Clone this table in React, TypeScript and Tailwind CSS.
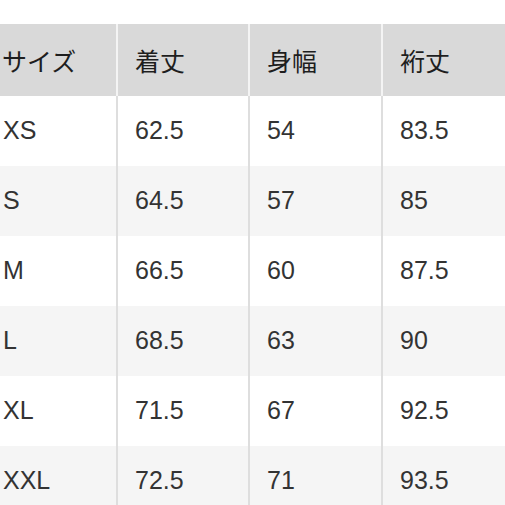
import React from "react";

const header = ["サイズ", "着丈", "身幅", "裄丈"];
const rows = [
  ["XS", "62.5", "54", "83.5"],
  ["S", "64.5", "57", "85"],
  ["M", "66.5", "60", "87.5"],
  ["L", "68.5", "63", "90"],
  ["XL", "71.5", "67", "92.5"],
  ["XXL", "72.5", "71", "93.5"],
];

const cols = "grid grid-cols-[116px_132px_133px_1fr]";

export default function App() {
  return (
    <div
      className="w-[505px] h-[505px] overflow-hidden bg-white pt-[24px]"
      style={{ fontFamily: '"Liberation Sans", "Noto Sans CJK JP", Arial, sans-serif' }}
    >
      <div className={`${cols} h-[72px] bg-[#d9d9d9] text-[25px] text-[#1e1e1e]`}>
        {header.map((h, i) => (
          <div
            key={i}
            className={`flex items-center ${i === 0 ? "pl-[2px]" : "pl-[17px] border-l-2 border-[#f4f4f4]"}`}
            style={{ fontFamily: '"Noto Sans CJK JP", sans-serif' }}
          >
            <span className="leading-none">{h}</span>
          </div>
        ))}
      </div>
      {rows.map((r, ri) => (
        <div
          key={ri}
          className={`${cols} h-[70px] text-[25px] text-[#333333] ${ri % 2 === 1 ? "bg-[#f5f5f5]" : "bg-white"}`}
        >
          {r.map((c, ci) => (
            <div
              key={ci}
              className={`flex items-center ${ci === 0 ? "pl-[3px]" : "pl-[17px] border-l-2 border-[#dedede]"}`}
            >
              {c}
            </div>
          ))}
        </div>
      ))}
    </div>
  );
}
